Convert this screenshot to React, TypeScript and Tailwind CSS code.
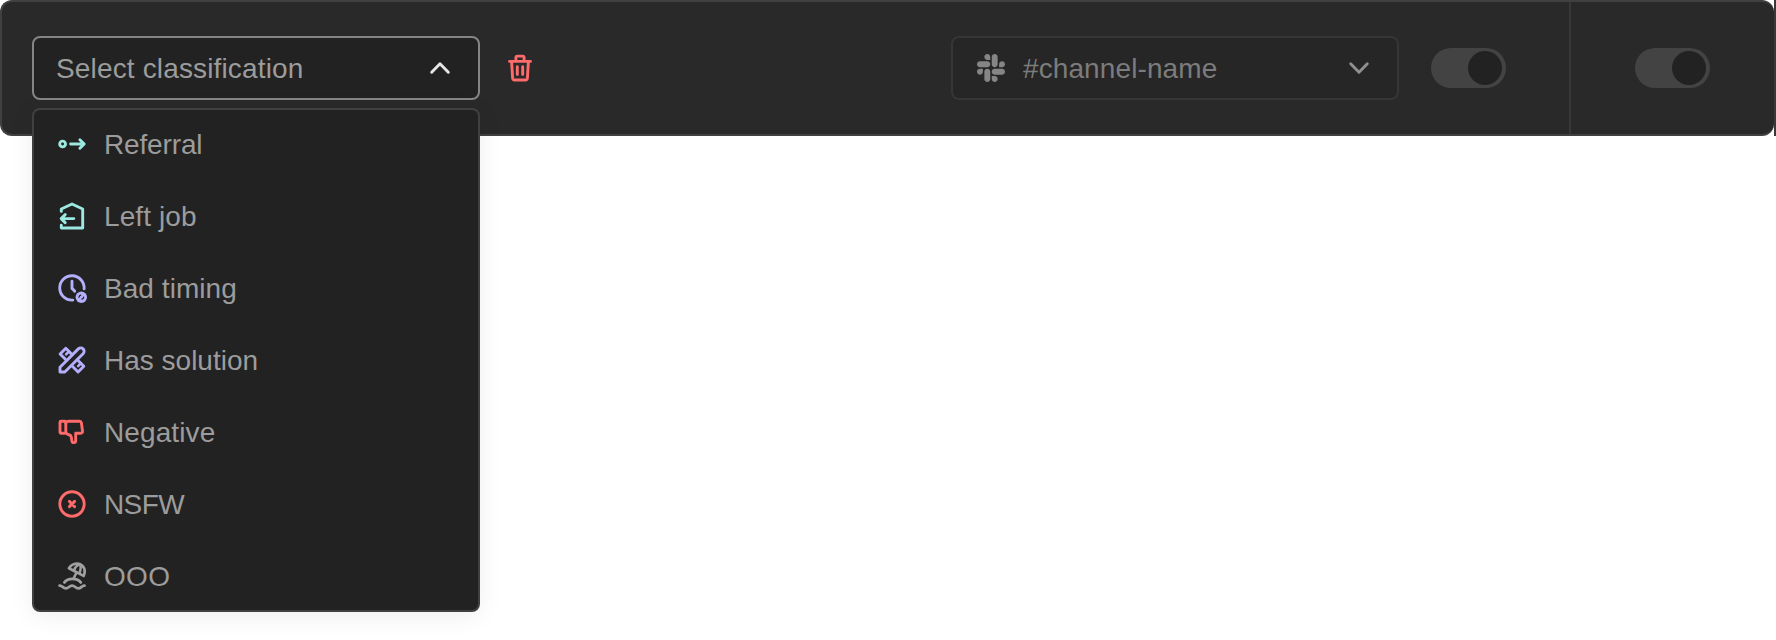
import type { ReactNode } from "react";
import { FaSlack } from "react-icons/fa";

function Icon({ className, children }: { className: string; children: ReactNode }) {
  return (
    <svg
      viewBox="0 0 32 32"
      fill="none"
      stroke="currentColor"
      strokeWidth="2.9"
      strokeLinecap="round"
      strokeLinejoin="round"
      className={`size-8 shrink-0 ${className}`}
    >
      {children}
    </svg>
  );
}

const options: { label: string; color: string; spacing: string; icon: ReactNode }[] = [
  {
    label: "Referral",
    color: "text-[#9ce9e1]",
    spacing: "tracking-[-0.15px]",
    icon: (
      <>
        <circle cx="6.6" cy="16" r="2.9" />
        <path d="M14.6 16H28.1M23.9 11.8l4.3 4.2-4.3 4.200" />
      </>
    ),
  },
  {
    label: "Left job",
    color: "text-[#9ce9e1]",
    spacing: "tracking-[0.1px]",
    icon: (
      <>
        <path d="M5.300 11.400V9L16 4l10.700 5v19H5.300v-2.700" />
        <path d="M17.800 18.600H5.400M9.200 14.600l-4 4 4 4" />
      </>
    ),
  },
  {
    label: "Bad timing",
    color: "text-[#b4affb]",
    spacing: "tracking-[0.05px]",
    icon: (
      <>
        <path d="M28.100 16.800A12.200 12.200 0 1 0 16.800 28.100" />
        <path d="M16 9.200v7.200l2.700 2.700" />
        <circle cx="25.300" cy="25.200" r="5.700" fill="currentColor" stroke="none" />
        <path d="M23 25.200a2.300 2.300 0 0 1 1.700-2M27.600 25.200a2.300 2.300 0 0 1-1.700 2" stroke="#222222" strokeWidth="1.300" />
      </>
    ),
  },
  {
    label: "Has solution",
    color: "text-[#b4affb]",
    spacing: "tracking-[0px]",
    icon: (
      <>
        <path d="M4 28V23.200L22.300 4.900a3.370 3.370 0 0 1 4.800 4.800L8.800 28z" />
        <path d="M10.400 16.300L4.100 10l5.700-5.700 6.300 6.300M21.600 16l6.200 6.300-5.700 5.700-6.300-6.300" />
        <path d="M12.700 7.700l-2.600 2.600M24.700 19.500l-2.600 2.600" strokeWidth="2.500" />
      </>
    ),
  },
  {
    label: "Negative",
    color: "text-[#ff6b6b]",
    spacing: "tracking-[0.1px]",
    icon: (
      <>
        <rect x="4" y="5.300" width="5.800" height="12" rx="1" />
        <path d="M9.800 7c.5-1.100 1.300-1.700 2.600-1.700h11.100c1 0 1.700.6 1.900 1.500l1.100 8.300c.2 1.300-.5 2.100-1.700 2.100h-5.100v7.600c0 1.200-.7 1.800-1.800 1.800s-1.800-.6-2-1.700l-.7-4.100c-.2-1-.8-1.500-1.700-1.800-1.900-.5-2.700-1-3.700-2.400" />
      </>
    ),
  },
  {
    label: "NSFW",
    color: "text-[#ff6b6b]",
    spacing: "tracking-[-0.6px]",
    icon: (
      <>
        <circle cx="16" cy="16" r="12.200" />
        <path d="M13.400 13.400l5.200 5.200M18.600 13.400l-5.200 5.200" />
      </>
    ),
  },
  {
    label: "OOO",
    color: "text-[#a0a0a0]",
    spacing: "tracking-[0.3px]",
    icon: (
      <>
        <path d="M12.900 8.200C16 3.400 22.100 2.200 25.800 5.200c3.100 2.700 3.400 7.100 1.800 10.700z" strokeWidth="2.700" />
        <path d="M18 10.800c1-3.500 3.300-5.800 6.100-6.200M23.400 13.200c1.300-3.200 1.800-6.200.8-8.800M20.600 12.300l-3.200 6.600" strokeWidth="2.500" />
        <path d="M8.400 22.400c1.600-2.200 4.600-3.500 8.200-3.500s6.600 1.300 8.200 3.500" strokeWidth="2.800" />
        <path d="M3.600 25.700c2.500-.5 3.400 2.700 6.300 2.700 3 0 3.200-2.700 6.200-2.700s3.200 2.700 6.200 2.700 3.700-3.200 6.200-2.700" strokeWidth="2.800" />
      </>
    ),
  },
];

function Toggle() {
  return (
    <div className="flex h-10 w-[75px] shrink-0 items-center justify-end rounded-full bg-[#434343] pr-1">
      <div className="size-[34px] rounded-full bg-[#222222]" />
    </div>
  );
}

export default function App() {
  return (
    <div className="h-[640px] w-[1776px] overflow-hidden bg-white font-['Liberation_Sans',sans-serif] text-[28px] leading-8">
      <div className="flex h-[136px]">
        <div className="flex w-[1774px] rounded-xl border-2 border-r-0 border-[#404040] bg-[#292929]">
          <div className="flex w-[1567px] items-center pl-[30px]">
            <div className="relative h-16 w-[448px] shrink-0">
              <div className="flex h-16 items-center justify-between rounded-lg border-2 border-[#858585] bg-[#222222] px-[22px] text-[#9c9c9c]">
                <span className="pt-0.5 tracking-[0.15px]">Select classification</span>
                <Icon className="text-[#e6e6e6]">
                  <path d="M7.700 20.300L16 11.800l8.300 8.500" strokeWidth="2.900" />
                </Icon>
              </div>
              <ul className="absolute top-[72px] left-0 z-10 flex h-[504px] w-[448px] flex-col justify-center rounded-lg border-2 border-[#404040] bg-[#222222] shadow-[0_4px_24px_rgba(0,0,0,0.07)]">
                {options.map((option) => (
                  <li key={option.label} className="flex h-[72px] shrink-0 items-center gap-4 pl-[22px]">
                    <Icon className={option.color}>{option.icon}</Icon>
                    <span className={`pt-0.5 text-[#9c9c9c] ${option.spacing}`}>{option.label}</span>
                  </li>
                ))}
              </ul>
            </div>
            <button className="ml-6">
              <Icon className="text-[#ff6b6b]">
                <path d="M5.500 9.400h21M11.900 9.400V5.600c0-1 .6-1.500 1.500-1.500h5.200c1 0 1.500.5 1.500 1.500v3.800M7.600 9.400l1 16.800c.1 1.200.8 1.800 1.900 1.800h11c1.100 0 1.800-.6 1.900-1.800l1-16.800M13.300 14.800v7.800M18.700 14.800v7.800" />
              </Icon>
            </button>
            <div className="ml-auto flex items-center gap-8 pr-[63px]">
              <div className="flex h-16 w-[448px] items-center rounded-lg border-2 border-[#363636] bg-[#262626] px-[22px] text-[#7c7c7c]">
                <FaSlack className="h-8 w-8 shrink-0" color="#858585" />
                <span className="ml-4 pt-0.5 tracking-[0.1px]">#channel-name</span>
                <Icon className="ml-auto text-[#909090]">
                  <path d="M7.700 11.800L16 20.300l8.300-8.500" strokeWidth="2.900" />
                </Icon>
              </div>
              <Toggle />
            </div>
          </div>
          <div className="flex flex-1 items-center justify-center border-l-2 border-[#383838]">
            <Toggle />
          </div>
        </div>
        <div className="w-0.5 bg-[#383838]" />
      </div>
    </div>
  );
}
